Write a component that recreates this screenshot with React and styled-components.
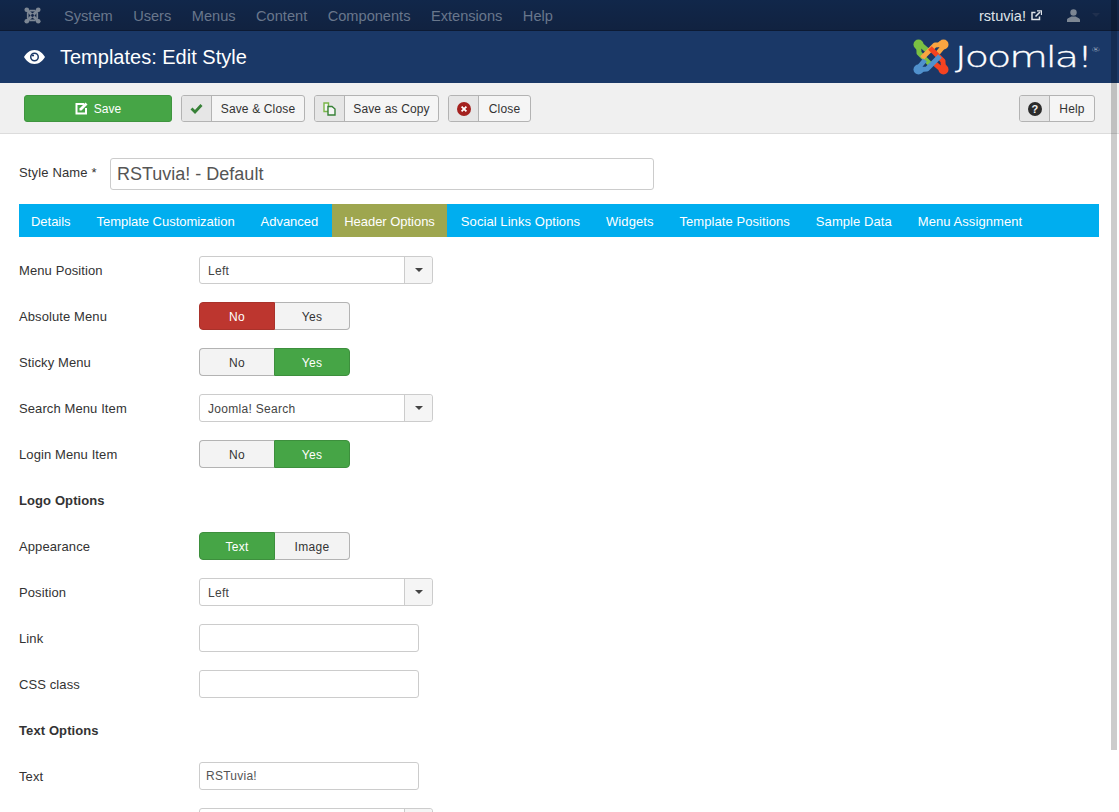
import React from "react";
import styled, { createGlobalStyle } from "styled-components";

const Global = createGlobalStyle`
  html, body { margin: 0; padding: 0; height: 100%; overflow: hidden; background: #fff; }
  body { font-family: "Liberation Sans", Arial, sans-serif; font-size: 13px; color: #333; }
  #root { height: 100%; }
`;

const Page = styled.div`
  position: relative;
  height: 812px;
  overflow: hidden;
`;
const ScrollThumb = styled.div`
  position: absolute;
  top: 0;
  right: 2px;
  width: 6px;
  height: 750px;
  background: rgba(0, 0, 0, 0.2);
  z-index: 5;
`;

const NavBar = styled.nav`
  display: flex;
  align-items: center;
  height: 30px;
  padding: 0 19px 0 24px;
  background: linear-gradient(#11274a, #112240);
  border-bottom: 1px solid #0c1a33;
  font-size: 14.6px;
`;
const NavBrand = styled.span`
  display: inline-flex;
  width: 40px;
`;
const NavItem = styled.a`
  margin-right: 20.5px;
  padding-top: 1px;
  color: #69778c;
`;
const NavRight = styled.div`
  margin-left: auto;
  display: flex;
  align-items: center;
`;
const SiteName = styled.span`
  padding-top: 1px;
  color: #dfe3e8;
  margin-right: 5px;
`;
const UserBox = styled.span`
  display: inline-flex;
  align-items: center;
  margin-left: 25px;
`;
const Caret = styled.span`
  display: inline-block;
  width: 0;
  height: 0;
  margin-left: ${(p) => p.$gap || 0}px;
  border-left: 4px solid transparent;
  border-right: 4px solid transparent;
  border-top: 4px solid ${(p) => p.$color};
`;

const TitleBar = styled.header`
  display: flex;
  align-items: center;
  justify-content: space-between;
  height: 52px;
  padding: 0 19px 0 24px;
  background: #1a3867;
`;
const Title = styled.h1`
  display: flex;
  align-items: center;
  margin: 0;
  font-size: 20px;
  font-weight: 400;
  color: #fff;
  svg { margin-right: 15px; }
`;
const Logo = styled.div`
  display: flex;
  align-items: center;
  width: 187px;
`;
const LogoWord = styled.span`
  display: inline-block;
  width: 106px;
  margin-left: 6px;
  font-family: "DejaVu Sans", Lato, sans-serif;
  font-weight: 200;
  font-size: 29px;
  line-height: 36px;
  letter-spacing: -1.5px;
  -webkit-text-stroke: 0.35px #fff;
  color: #fff;
  white-space: nowrap;
  transform: scaleX(1.37);
  transform-origin: left center;
`;
const Reg = styled.sup`
  font-size: 7px;
  line-height: 0;
  letter-spacing: 0;
  -webkit-text-stroke: 0;
  color: #c9d0da;
  vertical-align: 15px;
`;

const Toolbar = styled.div`
  display: flex;
  gap: 9px;
  height: 51px;
  padding: 12px 24px 0;
  box-sizing: border-box;
  background: #f0f0f0;
  border-bottom: 1px solid #dcdcdc;
`;
const Button = styled.button`
  display: flex;
  align-items: stretch;
  height: 27px;
  padding: 0;
  width: ${(p) => p.$w}px;
  margin-left: ${(p) => (p.$push ? "auto" : 0)};
  border: 1px solid #b3b3b3;
  border-radius: 3px;
  background: #f5f5f5;
  color: #333;
  font-family: inherit;
  font-size: 12px;
  letter-spacing: 0.15px;
  overflow: hidden;
`;
const BtnIcon = styled.span`
  display: flex;
  align-items: center;
  justify-content: center;
  width: 29px;
  flex: none;
  background: #e6e6e6;
  border-right: 1px solid #b3b3b3;
`;
const BtnLabel = styled.span`
  flex: 1;
  align-self: center;
  text-align: center;
`;
const SaveButton = styled(Button)`
  width: 148px;
  align-items: center;
  justify-content: center;
  gap: 6px;
  background: #46a546;
  border-color: #3f953f;
  color: #fff;
  letter-spacing: 0;
`;
const Content = styled.main`
  padding: 24px 20px 0 19px;
`;
const NameRow = styled.div`
  display: flex;
  align-items: center;
  margin-bottom: 14px;
`;
const NameLabel = styled.label`
  width: 91px;
  margin-top: -4px;
  font-size: 13px;
  letter-spacing: 0.15px;
`;
const NameInput = styled.input`
  width: 544px;
  height: 32px;
  box-sizing: border-box;
  padding: 0 6px;
  border: 1px solid #ccc;
  border-radius: 3px;
  font-family: inherit;
  font-size: 18px;
  color: #555;
`;
const Tabs = styled.div`
  display: flex;
  height: 33px;
  background: #00aeef;
  margin-bottom: 19px;
`;
const Tab = styled.a`
  display: flex;
  align-items: center;
  padding: 1px 12px 0;
  margin-right: 2px;
  color: #fff;
  font-size: 13px;
  letter-spacing: ${(p) => p.$ls}px;
  background: ${(p) => (p.$active ? "#9ea64f" : "transparent")};
`;
const Row = styled.div`
  display: flex;
  align-items: center;
  height: 28px;
  margin-bottom: 18px;
`;
const Label = styled.label`
  width: 180px;
  flex: none;
  font-size: 13px;
  font-weight: ${(p) => (p.$bold ? 700 : 400)};
  letter-spacing: 0.1px;
`;
const Select = styled.div`
  display: flex;
  width: 234px;
  height: 28px;
  box-sizing: border-box;
  border: 1px solid #ccc;
  border-radius: 3px;
  background: #fff;
  color: #444;
  font-size: 12px;
  letter-spacing: 0.3px;
`;
const SelectValue = styled.span`
  flex: 1;
  align-self: center;
  padding: 1px 0 0 8px;
`;
const SelectArrow = styled.span`
  display: flex;
  align-items: center;
  justify-content: center;
  width: 27px;
  background: #f5f5f5;
  border-left: 1px solid #ccc;
  border-radius: 0 3px 3px 0;
`;
const Input = styled.input`
  width: 220px;
  height: 28px;
  box-sizing: border-box;
  padding: 0 6px;
  border: 1px solid #ccc;
  border-radius: 3px;
  font-family: inherit;
  font-size: 12px;
  letter-spacing: 0.25px;
  color: #555;
`;
const Toggle = styled.div`
  display: flex;
  width: 151px;
  height: 28px;
`;
const colors = { red: ["#bd362f", "#a9322b"], green: ["#46a546", "#3d8f3d"] };
const ToggleOpt = styled.span`
  flex: 1;
  display: flex;
  align-items: center;
  justify-content: center;
  box-sizing: border-box;
  padding-top: 1px;
  font-size: 12px;
  letter-spacing: 0.3px;
  border: 1px solid ${(p) => (p.$on ? colors[p.$on][1] : "#b3b3b3")};
  background: ${(p) => (p.$on ? colors[p.$on][0] : "#f3f3f3")};
  color: ${(p) => (p.$on ? "#fff" : "#333")};
  &:first-child { border-radius: 4px 0 0 4px; border-right: ${(p) => (p.$on ? "" : "0")}; }
  &:last-child { border-radius: 0 4px 4px 0; border-left: ${(p) => (p.$on ? "" : "0")}; }
`;

const JoomlaSmall = () => (
  <svg width="17" height="17" viewBox="0 0 16 16" fill="none">
    <g stroke="#7d8794" strokeWidth="2.6">
      <path d="M3 3L13 13M13 3L3 13" />
      <path d="M5 3.5H11M5 12.5H11M3.5 5V11M12.5 5V11" strokeWidth="1.6" />
    </g>
    <g fill="#7d8794">
      <circle cx="2.6" cy="2.6" r="2.2" />
      <circle cx="13.4" cy="2.6" r="2.2" />
      <circle cx="2.6" cy="13.4" r="2.2" />
      <circle cx="13.4" cy="13.4" r="2.2" />
    </g>
    <circle cx="8" cy="8" r="1.3" fill="#132548" />
  </svg>
);

const JoomlaMark = () => (
  <svg width="36" height="36" viewBox="0 0 36 36" fill="none">
    {["#7ac143", "#f9a541", "#f44321", "#5091cd"].map((c, i) => (
      <g key={c} transform={`rotate(${i * 90} 18 18)`}>
        <path
          d="M15 12L8.5 6.5C6 4.500 3.500 7 5.500 9.500C6 10.500 6 12 6 14L19 27"
          stroke={c}
          strokeWidth="5"
          strokeLinejoin="round"
        />
        <circle cx="5.500" cy="5.500" r="5" fill={c} />
      </g>
    ))}
  </svg>
);

const Eye = () => (
  <svg width="21" height="14" viewBox="0 0 21 14">
    <path
      fillRule="evenodd"
      fill="#fff"
      d="M10.500 0C15.500 0 19 3.500 21 7c-2 3.500-5.500 7-10.500 7S2 10.500 0 7c2-3.500 5.500-7 10.500-7zM10.500 2.500A4.500 4.500 0 1 0 10.500 11.500A4.500 4.500 0 1 0 10.500 2.500z"
    />
    <circle cx="10.500" cy="7" r="3" fill="#fff" />
    <circle cx="9" cy="5.500" r="1.100" fill="#1a3867" />
  </svg>
);

const External = () => (
  <svg width="11" height="11" viewBox="0 0 11 11" fill="none" stroke="#dfe3e8">
    <path d="M8.500 6.500V9.500H1V2.500H4.500" strokeWidth="1.500" />
    <path d="M4.500 6.500L9 2" strokeWidth="1.600" />
    <path d="M6 .8H10.500V5" strokeWidth="1.300" />
  </svg>
);

const User = () => (
  <svg width="13" height="13" viewBox="0 0 13 13" fill="#7d8794">
    <circle cx="6.500" cy="3.500" r="3.200" />
    <path d="M0 13V11C0 9 3 8.500 4.500 7.500H8.500C10 8.500 13 9 13 11V13Z" />
  </svg>
);

const EditIcon = () => (
  <svg width="13" height="13" viewBox="0 0 13 13" fill="none">
    <path d="M9 2H1.500V11.500H11V6" stroke="#fff" strokeWidth="2" />
    <path d="M4.500 6.500L10.500 .5L12.500 2.500L6.500 8.500H4.500Z" fill="#fff" />
  </svg>
);
const Check = () => (
  <svg width="13" height="11" viewBox="0 0 13 11" fill="none">
    <path d="M1.500 5.500L5 9L11.500 2" stroke="#378137" strokeWidth="2.800" />
  </svg>
);
const CopyIcon = () => (
  <svg width="13" height="14" viewBox="0 0 13 14" fill="#f5f5f5" strokeWidth="1.400">
    <path d="M1 1H5.500V9.500H1Z" stroke="#7ab648" />
    <path d="M5 4.500H9L12 7V13H5Z" stroke="#378137" />
  </svg>
);
const CloseIcon = () => (
  <svg width="14" height="14" viewBox="0 0 14 14">
    <circle cx="7" cy="7" r="7" fill="#a4211f" />
    <path d="M4.600 4.600L9.400 9.400M9.400 4.600L4.600 9.400" stroke="#fff" strokeWidth="1.800" />
  </svg>
);
const HelpIcon = () => (
  <svg width="14" height="14" viewBox="0 0 14 14">
    <circle cx="7" cy="7" r="7" fill="#2b2b2b" />
    <text x="7" y="11" textAnchor="middle" fontSize="11" fontWeight="700" fontFamily="Liberation Sans" fill="#f0f0f0">?</text>
  </svg>
);

const SelectField = ({ value }) => (
  <Select>
    <SelectValue>{value}</SelectValue>
    <SelectArrow><Caret $color="#444" /></SelectArrow>
  </Select>
);
const ToggleField = ({ left, right, on, color }) => (
  <Toggle>
    <ToggleOpt $on={on === 0 ? color : undefined}>{left}</ToggleOpt>
    <ToggleOpt $on={on === 1 ? color : undefined}>{right}</ToggleOpt>
  </Toggle>
);

const tabs = [
  { label: "Details", ls: -0.03 },
  { label: "Template Customization", ls: -0.03 },
  { label: "Advanced", ls: -0.03 },
  { label: "Header Options", ls: -0.03, active: true },
  { label: "Social Links Options", ls: 0.07 },
  { label: "Widgets", ls: 0.07 },
  { label: "Template Positions", ls: 0.07 },
  { label: "Sample Data", ls: 0.07 },
  { label: "Menu Assignment", ls: 0.07 },
];
const nav = ["System", "Users", "Menus", "Content", "Components", "Extensions", "Help"];
const toolButtons = [
  { label: "Save & Close", w: 124, icon: <Check /> },
  { label: "Save as Copy", w: 125, icon: <CopyIcon /> },
  { label: "Close", w: 83, icon: <CloseIcon /> },
];

export default function App() {
  return (
    <Page>
      <Global />
      <ScrollThumb />
      <NavBar>
        <NavBrand><JoomlaSmall /></NavBrand>
        {nav.map((n) => <NavItem key={n}>{n}</NavItem>)}
        <NavRight>
          <SiteName>rstuvia!</SiteName>
          <External />
          <UserBox><User /><Caret $gap={12} $color="#20304e" /></UserBox>
        </NavRight>
      </NavBar>
      <TitleBar>
        <Title><Eye />Templates: Edit Style</Title>
        <Logo>
          <JoomlaMark />
          <LogoWord>Joomla!<Reg>®</Reg></LogoWord>
        </Logo>
      </TitleBar>
      <Toolbar>
        <SaveButton><EditIcon />Save</SaveButton>
        {toolButtons.map((b) => (
          <Button key={b.label} $w={b.w}>
            <BtnIcon>{b.icon}</BtnIcon>
            <BtnLabel>{b.label}</BtnLabel>
          </Button>
        ))}
        <Button $w={76} $push>
          <BtnIcon><HelpIcon /></BtnIcon>
          <BtnLabel>Help</BtnLabel>
        </Button>
      </Toolbar>
      <Content>
        <NameRow>
          <NameLabel>Style Name *</NameLabel>
          <NameInput defaultValue="RSTuvia! - Default" />
        </NameRow>
        <Tabs>
          {tabs.map((t) => <Tab key={t.label} $ls={t.ls} $active={t.active}>{t.label}</Tab>)}
        </Tabs>
        <Row><Label>Menu Position</Label><SelectField value="Left" /></Row>
        <Row><Label>Absolute Menu</Label><ToggleField left="No" right="Yes" on={0} color="red" /></Row>
        <Row><Label>Sticky Menu</Label><ToggleField left="No" right="Yes" on={1} color="green" /></Row>
        <Row><Label>Search Menu Item</Label><SelectField value="Joomla! Search" /></Row>
        <Row><Label>Login Menu Item</Label><ToggleField left="No" right="Yes" on={1} color="green" /></Row>
        <Row><Label $bold>Logo Options</Label></Row>
        <Row><Label>Appearance</Label><ToggleField left="Text" right="Image" on={0} color="green" /></Row>
        <Row><Label>Position</Label><SelectField value="Left" /></Row>
        <Row><Label>Link</Label><Input /></Row>
        <Row><Label>CSS class</Label><Input /></Row>
        <Row><Label $bold>Text Options</Label></Row>
        <Row><Label>Text</Label><Input defaultValue="RSTuvia!" /></Row>
        <Row><Label /><SelectField value="" /></Row>
      </Content>
    </Page>
  );
}
